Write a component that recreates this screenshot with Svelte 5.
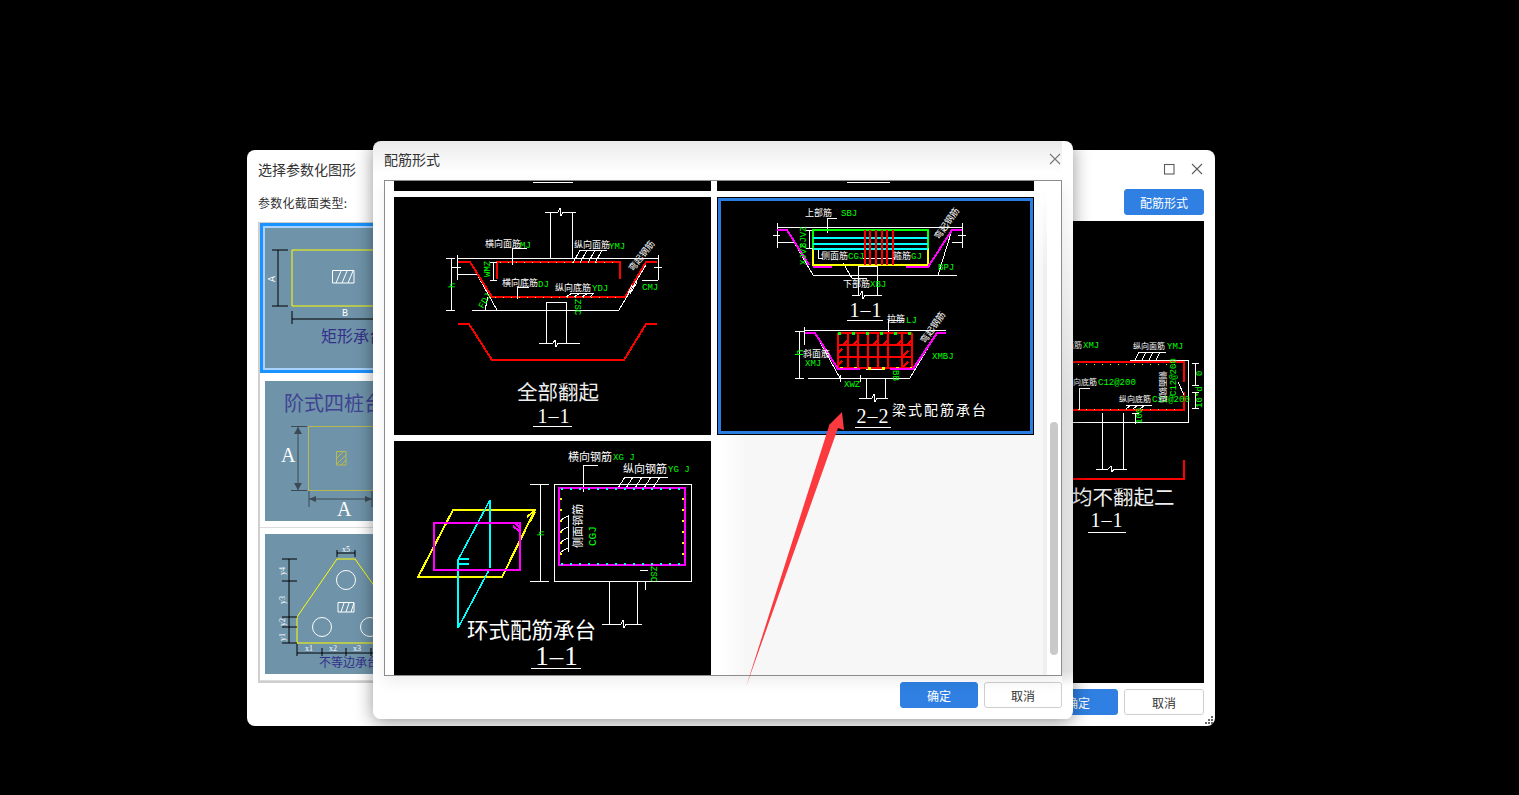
<script>
  const gridX = [838, 848, 858, 868, 878, 888, 902, 912];
  const gridY = [333, 345, 357, 368];
  const hooks = [[848,340],[858,340],[878,340],[902,340],[912,340],[842,349],[842,361],[888,340],[908,351],[908,362]];
  const ringTeeth = [521, 532, 543, 553];
</script>

<div class="desk">
  <section class="win back">
    <header class="bar">
      <span class="title">选择参数化图形</span>
      <span class="icons">
        <svg class="ico" viewBox="0 0 12 12"><rect x="1.500" y="1.500" width="9.500" height="9.500" /></svg>
        <svg class="ico" viewBox="0 0 12 12"><path d="M1 1 11 11M11 1 1 11" /></svg>
      </span>
    </header>
    <div class="tools">
      <span class="lab">参数化截面类型:</span>
      <button class="btn pri wide">配筋形式</button>
    </div>
    <div class="main">
      <div class="types">
        <div class="type sel">
          <svg class="pic" viewBox="265 228 228 140">
            <path class="y1" d="M292 250H440V306H292Z" />
            <path class="k1" d="M278 250V306M272 250H288M272 306H288M292 311V324M292 319H440" />
            <path class="w1" d="M332.500 270.500H354V283H332.500ZM336 283 341 271M342 283 347 271M348 283 353 271" />
            <text class="mono" transform="rotate(-90 275 282)" x="275" y="282">A</text>
            <text class="mono" x="342" y="316">B</text>
            <text class="pn b16" x="321" y="342">矩形承台</text>
          </svg>
        </div>
        <div class="type">
          <svg class="pic" viewBox="265 381 228 140">
            <text class="pn b20" x="284" y="411">阶式四桩台</text>
            <path class="y2" d="M308.500 426.500H440V490.500H308.500Z" />
            <path class="k2" d="M298 426V491M291 426.500H307M291 490.500H307M309 491V507M372 491V507M309 499H372" />
            <path class="fk" d="M298 427 294 434H302ZM298 490 294 483H302ZM309 499 316 496V502ZM372 499 365 496V502Z" />
            <path class="y2" d="M336.500 451.500H346V465H336.500ZM337 458 343 452M337 464 346 455M341 465 346 460" />
            <text class="ser" x="281" y="462">A</text>
            <text class="ser" x="337" y="516">A</text>
          </svg>
        </div>
        <div class="type">
          <svg class="pic" viewBox="265 534 228 140">
            <path class="y1" d="M297 643V617L337 559H355L400 622V643Z" />
            <path class="k1" d="M289 559V643M282 559H297M282 581H297M282 617H297M282 627H297M282 643H297M297 644V656M322 648V656M346 648V656M371 648V656M297 653H375M337 553H355M337 550V557M355 550V557" />
            <path class="w1" d="M338 602.500H354V612H338ZM341 612 344 603M346 612 349 603M351 612 354 603" />
            <circle class="w1" cx="346" cy="580" r="9.500" />
            <circle class="w1" cx="322" cy="627" r="9.500" />
            <circle class="w1" cx="370" cy="627" r="9.500" />
            <text class="tiny" x="342" y="552">x5</text>
            <text class="tiny" x="305" y="651">x1</text>
            <text class="tiny" x="329" y="651">x2</text>
            <text class="tiny" x="353" y="651">x3</text>
            <text class="tiny" transform="rotate(-90 285 575)" x="285" y="575">y4</text>
            <text class="tiny" transform="rotate(-90 285 604)" x="285" y="604">y3</text>
            <text class="tiny" transform="rotate(-90 285 626)" x="285" y="626">y2</text>
            <text class="tiny" transform="rotate(-90 285 641)" x="285" y="641">y1</text>
            <text class="pn b12" x="319" y="667">不等边承台一</text>
          </svg>
        </div>
      </div>

      <svg class="pane" viewBox="510 221 694 462">
        <text class="t8" x="1066" y="348">面筋</text><text class="gt" x="1083" y="348">XMJ</text>
        <text class="t8" x="1133" y="349">纵向面筋</text><text class="gt" x="1167" y="349">YMJ</text>
        <path class="w" d="M1130 360H1188V422H1073M1134 362 1139 352M1141 362 1146 352M1148 362 1153 352M1155 362 1160 352M1139 352H1166" />
        <path class="r" d="M1073 362H1184V382M1184 392V410H1073" />
        <path class="dy" d="M1078 364H1180M1078 409H1180" />
        <text class="t8" x="1073" y="385">向底筋</text><text class="gt" x="1098" y="385">C12@200</text>
        <text class="t8" x="1119" y="402">纵向底筋</text><text class="gt" x="1152" y="402">C12@200</text>
        <path class="w" d="M1079 388H1090M1079 388V410M1126 409 1131 405M1133 409 1138 405M1140 409 1145 405M1126 405H1152M1178 382 1184 395M1102 413V469M1123 413V469M1096 469H1108L1111 466 1112 472 1114 469H1127M1135 413V424M1132 413H1139" />
        <text class="t8" transform="rotate(90 1160 371)" x="1160" y="371">侧面钢筋</text>
        <text class="gt" transform="rotate(-90 1176 396)" x="1176" y="396">C12@200</text>
        <path class="w" d="M1195 363V385M1192 363H1199M1192 385H1199M1195 392V408M1192 392H1199M1192 408H1199" />
        <text class="gt" transform="rotate(-90 1202 376)" x="1202" y="376">0</text>
        <text class="gt" transform="rotate(-90 1202 408)" x="1202" y="408">10*d</text>
        <text class="gt" transform="rotate(-90 1142 424)" x="1142" y="424">100</text>
        <path class="r" d="M1073 478.500H1184V460" />
        <text class="cap20" x="1072" y="505">均不翻起二</text>
        <text class="num" x="1107" y="527">1–1</text>
        <path class="w" d="M1088 532H1126" />
      </svg>
    </div>
    <footer class="foot">
      <button class="btn pri wide">确定</button>
      <button class="btn wide">取消</button>
    </footer>
    <svg class="grip" viewBox="0 0 9 9">
      <path d="M7 1h2v2H7zM4 4h2v2H4zM7 4h2v2H7zM1 7h2v2H1zM4 7h2v2H4zM7 7h2v2H7z" />
    </svg>
  </section>

  <section class="win front">
    <header class="bar fbar">
      <span class="title">配筋形式</span>
      <svg class="ico soft" viewBox="0 0 12 12"><path d="M1 1 11 11M11 1 1 11" /></svg>
    </header>
    <div class="list">
      <div class="cells">
        <svg class="sliver" viewBox="394 181 317 10"><path class="w" d="M533 182H573" /></svg>
        <svg class="sliver" viewBox="717 181 317 10"><path class="w" d="M847 182H890" /></svg>

        <svg class="cell tall" viewBox="394 197 317 238">
          <path class="w" d="M550 213V258M572 213V258M545 212H558L560 208 561 216 563 212H576M457 258H658M451 258V310M446 258H455M446 310H455M457 255V280M452 267H461M457 274H477M658 255V280M654 267H662M644 280H658M470 262 497 310M472 310H619M619 310 646 265M546 302V343M566 302V343M546 302H566M539 343H553L555 340 556 347 558 343H580" />
          <path class="r" d="M458 262H470L492 297H625L646 262H657M497 279V262H620V279" />
          <path class="r" d="M458 324H469L492 360H624L646 324H657" />
          <path class="dy" d="M500 262.500H618M495 297H622" />
          <text class="t" x="485" y="247">横向面筋</text><text class="gt" x="520" y="248">MJ</text>
          <text class="t" x="574" y="248">纵向面筋</text><text class="gt" x="609" y="249">YMJ</text>
          <path class="w" d="M512 265V248H527M580 250H607M580 250 573 263M587 250 580 263M595 250 588 263M602 250 595 263M493 262V280M490 262H497M490 280H497" />
          <text class="t" x="502" y="286">横向底筋</text><text class="gt" x="538" y="287">DJ</text>
          <text class="t" x="555" y="291">纵向底筋</text><text class="gt" x="592" y="291">YDJ</text>
          <path class="w" d="M517 299V287H529M572 293H594M566 297 572 293M574 297 580 293M582 297 588 293M590 297 594 293M642 280H653M485 310 488 297M627 296 632 285M630 294 637 282" />
          <text class="gt" x="642" y="290">CMJ</text>
          <text class="gt" transform="rotate(-90 490 277)" x="490" y="277">WMZ</text>
          <text class="gt" transform="rotate(-90 455 288)" x="455" y="288">h</text>
          <text class="gt" transform="rotate(-60 483 309)" x="483" y="309">FDJ</text>
          <text class="gt" transform="rotate(90 575 299)" x="575" y="299">ZSC</text>
          <text class="t" transform="rotate(-52 633 272)" x="633" y="272">弯起钢筋</text>
          <text class="cap20" x="517" y="400">全部翻起</text>
          <text class="num" x="554" y="423">1–1</text>
          <path class="w" d="M533 426H572" />
        </svg>

        <svg class="cell tall" viewBox="717 197 317 238">
          <path class="w" d="M777 227H962M777 223V248M773 235H780M777 242H795M962 223V248M958 235H966M952 242H962M787 230 813 275H957M938 275 952 230M827 233V218H837M809 230V248M806 230H812M806 248H812M818 250V258H823M863 258H895M843 263 852 278H867M858 266V295M877 266V295M858 266H877M852 295H860L862 291 863 299 865 295H882" />
          <path class="gs" d="M813 248V230H928V248" />
          <path class="ys" d="M813 248V265H928V248" />
          <path class="cy" d="M813 238H928M813 244H928M813 249H928" />
          <path class="r2" d="M865 230V265M870 230V265M876 230V265M882 230V265M887 230V265M893 230V265" />
          <path class="m" d="M777 230H787L809 265M813 267H832M906 267H928L952 230H962" />
          <text class="t" x="805" y="216">上部筋</text><text class="gt" x="841" y="216">SBJ</text>
          <text class="gt" transform="rotate(-90 806 248)" x="806" y="248">8JVZ</text>
          <text class="gt" transform="rotate(-90 806 265)" x="806" y="265">XJVZ</text>
          <text class="t" x="821" y="259">侧面筋</text><text class="gt" x="848" y="259">CGJ</text>
          <text class="t" x="893" y="259">箍筋</text><text class="gt" x="911" y="259">GJ</text>
          <text class="t" x="843" y="287">下部筋</text><text class="gt" x="870" y="287">XBJ</text>
          <text class="gt" x="938" y="270">BPJ</text>
          <text class="t" transform="rotate(-55 939 240)" x="939" y="240">弯起钢筋</text>
          <text class="num" x="866" y="317">1–1</text>
          <path class="w" d="M847 320H883" />

          <path class="w" d="M804 330H946M804 327V345M799 331V378M795 331H804M795 378H804M815 333 840 378H910L937 333M840 378 808 378M866 378V398M885 378V398M866 369H885M859 398H872L874 394 875 402 877 398H888M888 320V360M888 320H904M840 375V382M860 375V382" />
          {#each gridX as x}<path class="r1" d="M{x} 333V368" />{/each}
          {#each gridY as y}<path class="r1" d="M838 {y}H912" />{/each}
          {#each hooks as [x, y]}<path class="r1" d="M{x} {y} {x - 5} {y + 5}" />{/each}
          <path class="dg" d="M838 333H912" />
          <path class="dy2" d="M840 368H912" />
          <path class="m" d="M805 333H815L838 369H860M890 369H913L937 333H946" />
          <text class="t" x="887" y="322">拉筋</text><text class="gt" x="906" y="323">LJ</text>
          <text class="t" x="803" y="357">斜面筋</text><text class="gt" x="805" y="366">XMJ</text>
          <text class="gt" x="932" y="359">XMBJ</text>
          <text class="gt" x="844" y="387">XWZ</text>
          <text class="gb" transform="rotate(-90 803 356)" x="803" y="356">h</text>
          <text class="gt" transform="rotate(90 893 370)" x="893" y="370">BB</text>
          <text class="t" transform="rotate(-55 925 344)" x="925" y="344">弯起钢筋</text>
          <text class="cap14" x="892" y="415">梁式配筋承台</text>
          <text class="num" x="873" y="423">2–2</text>
          <path class="w" d="M855 427H891" />
          <rect class="halo" x="717.500" y="197.500" width="316" height="237" />
          <rect class="frame" x="719.500" y="199.500" width="312" height="233" />
        </svg>

        <svg class="cell short" viewBox="394 441 317 234">
          <path class="ys" d="M453 510H535L502 577H418Z" />
          <path class="ys" d="M527 517 534 511M530 522 535 512" />
          <path class="cy" d="M490 500V568M490 500 458 560V628L489 570M458 559H469M458 564H469" />
          <path class="m" d="M434 523H520V570H434ZM513 526 519 531M516 524 520 528" />
          <path class="w" d="M554 484H691V581H554ZM540 484V581M530 484H549M530 581H549M609 581V624M637 581V624M602 624H621L623 620 624 628 626 624H642M583 492V465H598M625 477H668M625 477 618 488M633 477 626 488M642 477 635 488M651 477 644 488M660 477 653 488M568 515V552M645 581V590M640 570H648" />
          {#each ringTeeth as y}<path class="w" d="M568 {y - 5} 559 {y}" />{/each}
          <path class="m" d="M559 488H685V565H559Z" />
          <path class="dc" d="M561 489H684M561 564H684" />
          <path class="dy3" d="M561 498V560M683 498V560" />
          <text class="t11" x="568" y="461">横向钢筋</text><text class="gt" x="613" y="460">XG J</text>
          <text class="t11" x="623" y="473">纵向钢筋</text><text class="gt" x="668" y="472">YG J</text>
          <text class="gt" transform="rotate(-90 544 536)" x="544" y="536">h</text>
          <text class="t11" transform="rotate(-90 582 548)" x="582" y="548">侧面钢筋</text>
          <text class="gb" transform="rotate(-90 596 546)" x="596" y="546">CGJ</text>
          <text class="gt" transform="rotate(90 651 566)" x="651" y="566">ZSC</text>
          <text class="cap21" x="467" y="638">环式配筋承台</text>
          <text class="num big" x="557" y="665">1–1</text>
          <path class="w" d="M531 668H581" />
        </svg>
        <div class="short"></div>
      </div>
      <span class="thumb"></span>
    </div>
    <footer class="foot">
      <button class="btn pri">确定</button>
      <button class="btn">取消</button>
    </footer>
  </section>

  <svg class="arrow" viewBox="0 0 1519 795">
    <path d="M842 412 844 430 838 428 746 687 829 426 829 425Z" />
  </svg>
</div>

<style>
  :global(body) { margin: 0; background: #000; }
  .desk { position: relative; width: 1519px; height: 795px; background: #000; overflow: hidden; font-family: "Noto Sans CJK SC", "Liberation Sans", sans-serif; color: #333; }
  .win { position: absolute; box-sizing: border-box; display: flex; flex-direction: column; background: #fff; }
  .back { left: 247px; top: 150px; width: 968px; height: 576px; border-radius: 8px; padding: 0 11px; }
  .front {
    left: 373px; top: 141px; width: 700px; height: 578px; border-radius: 8px; padding: 0 11px;
    box-shadow: 0 3px 18px rgba(0, 0, 0, .42);
    background:
      linear-gradient(180deg, #fff 45px, #e3e3e3 260px, #e3e3e3 530px, #fff 545px) right / 11px 100% no-repeat,
      linear-gradient(180deg, #ebebeb 0, #fff 32px);
  }
  .bar { display: flex; align-items: center; justify-content: space-between; box-sizing: border-box; height: 38px; padding-bottom: 1px; flex: none; }
  .fbar { height: 39px; padding-bottom: 3px; }
  .title { font-size: 14px; line-height: 18px; color: #333; }
  .icons { display: flex; gap: 16px; margin-right: 1px; align-items: center; }
  .ico { width: 12px; height: 12px; fill: none; stroke: #5c5c5c; stroke-width: 1.100; }
  .ico.soft { stroke: #777; margin-right: 1px; }
  .tools { display: flex; justify-content: space-between; align-items: center; height: 26px; margin-top: 1px; flex: none; }
  .lab { font-size: 12px; letter-spacing: .25px; color: #333; }
  .main { display: grid; grid-template-columns: 240px 694px; gap: 12px; justify-content: start; margin-top: 6px; height: 462px; flex: none; }
  .types { box-sizing: border-box; height: 461px; margin-top: 1px; border: solid #cfcfcf; border-width: 1px 2px 2px; background: #fff; }
  .type { padding: 6px 5px; border-bottom: 1px solid #dcdcdc; }
  .type.sel { padding: 2px; border: 3px solid #1a92ff; box-shadow: inset 0 0 0 2px #a9d3ff; }
  .type.sel + .type { margin-top: 2px; }
  .pic { display: block; width: 228px; height: 140px; background: #6f93a9; }
  .pane { display: block; width: 694px; height: 462px; background: #000; }
  .foot { display: flex; justify-content: flex-end; gap: 6px; margin-top: 6px; }
  .btn { box-sizing: border-box; width: 78px; height: 26px; padding: 0; border: 1px solid #cfcfcf; border-radius: 3px; background: #fff; color: #333; font: 12px "Noto Sans CJK SC", sans-serif; }
  .btn.pri { background: #2f80e2; border-color: #2f80e2; color: #fff; }
  .btn.wide { width: 80px; }
  .grip { position: absolute; right: 2px; bottom: 2px; width: 9px; height: 9px; }
  .grip path { fill: #666; }

  .list {
    position: relative; box-sizing: border-box; width: 678px; height: 496px; flex: none; border: 1px solid #8c8c8c; overflow: hidden;
    box-shadow: 0 6px 14px rgba(0, 0, 0, .07);
    background:
      linear-gradient(180deg, #fff 10px, rgba(255, 255, 255, 0) 90px),
      linear-gradient(90deg, #fff 335px, #f7f7f7 362px, #f7f7f7 658px, #efefef 658px, #efefef 662px, #fff 662px);
  }
  .cells { display: grid; grid-template-columns: 317px 317px; column-gap: 6px; row-gap: 6px; padding-left: 9px; }
  .cell, .sliver { display: block; width: 317px; background: #000; }
  .sliver { height: 10px; }
  .tall { height: 238px; }
  .short { height: 234px; }
  .thumb { position: absolute; left: 665px; top: 241px; width: 8px; height: 233px; border-radius: 4px; background: #c9c9c9; }

  .arrow { position: absolute; inset: 0; width: 1519px; height: 795px; pointer-events: none; }
  .arrow path { fill: #fb3a3f; }

  svg path, svg circle, svg rect { fill: none; }
  .cell, .sliver, .pane { shape-rendering: crispEdges; }
  .halo { stroke: #000; stroke-width: 1; }
  .frame { stroke: #2a7de1; stroke-width: 3; }
  .w { stroke: #fff; stroke-width: 1; }
  .r { stroke: #f00; stroke-width: 2; }
  .r1 { stroke: #f00; stroke-width: 2; }
  .r2 { stroke: #f00; stroke-width: 2; }
  .m { stroke: #f0f; stroke-width: 2; }
  .gs { stroke: #0f0; stroke-width: 2; }
  .ys { stroke: #ff0; stroke-width: 2; }
  .cy { stroke: #0ff; stroke-width: 1.600; }
  .dy { stroke: #ff0; stroke-width: 1; stroke-dasharray: 1 7; }
  .dy2 { stroke: #ff0; stroke-width: 3; stroke-dasharray: 3 11; }
  .dg { stroke: #0f0; stroke-width: 3; stroke-dasharray: 3 11; }
  .dc { stroke: #0ff; stroke-width: 2; stroke-dasharray: 2 7; }
  .dy3 { stroke: #ff0; stroke-width: 2; stroke-dasharray: 2 9; }
  .y1 { stroke: #ff0; stroke-width: 1; }
  .y2 { stroke: #b9ba4e; stroke-width: 1; }
  .k1 { stroke: #000; stroke-width: 1; }
  .k2 { stroke: #3c4a55; stroke-width: 1; }
  .w1 { stroke: #fff; stroke-width: 1; }
  svg path.fk { fill: #3c4a55; }

  text { font-family: "Noto Sans CJK SC", "Liberation Sans", sans-serif; fill: #fff; }
  .t { font-size: 9px; }
  .t8 { font-size: 8px; }
  .t11 { font-size: 11px; }
  .gt, .gb { font-family: "Liberation Mono", monospace; font-size: 9px; fill: #0f0; }
  .gb { font-size: 11px; }
  .mono { font-family: "Liberation Mono", monospace; font-size: 10px; }
  .tiny { font-family: "Liberation Serif", serif; font-size: 8px; }
  .ser { font-family: "Liberation Serif", serif; font-size: 20px; }
  .pn { fill: #33308a; }
  .b12 { font-size: 12px; }
  .b16 { font-size: 16px; }
  .b20 { font-size: 20px; fill: #3f4391; }
  .cap14 { font-size: 14px; letter-spacing: 2px; }
  .cap20 { font-size: 20.500px; fill: #eee; }
  .cap21 { font-size: 21.500px; }
  .num { font-family: "Liberation Serif", serif; font-size: 20px; letter-spacing: 1px; text-anchor: middle; }
  .big { font-size: 27px; letter-spacing: 1px; }
</style>
